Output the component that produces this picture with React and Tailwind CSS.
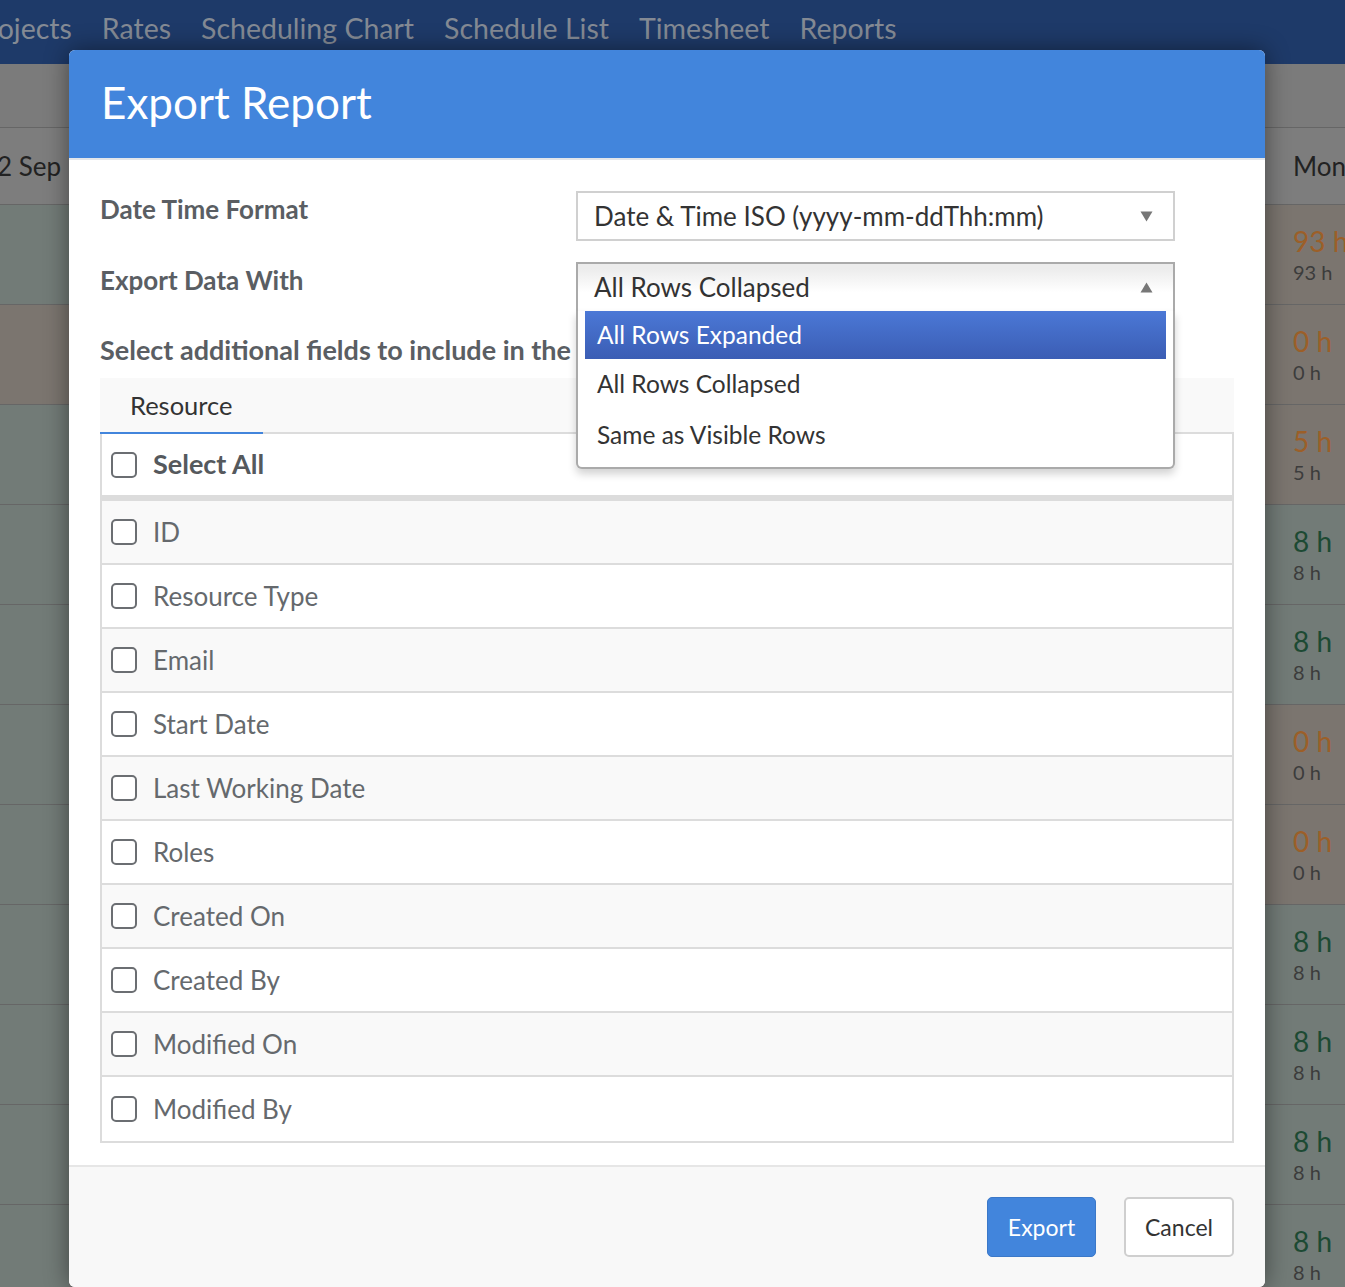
import React from 'react';

const fields = [
  'ID',
  'Resource Type',
  'Email',
  'Start Date',
  'Last Working Date',
  'Roles',
  'Created On',
  'Created By',
  'Modified On',
  'Modified By',
];

// background chart rows (left strip colour, right strip colour, value, tone)
const chartRows = [
  { left: 'bg-[#727b77]', right: 'bg-[#7b756f]', value: '93 h', tone: 'text-[#9c5f28]' },
  { left: 'bg-[#7b756f]', right: 'bg-[#7b756f]', value: '0 h', tone: 'text-[#9c5f28]' },
  { left: 'bg-[#727b77]', right: 'bg-[#7b756f]', value: '5 h', tone: 'text-[#9c5f28]' },
  { left: 'bg-[#727b77]', right: 'bg-[#727b77]', value: '8 h', tone: 'text-[#1d4a33]' },
  { left: 'bg-[#727b77]', right: 'bg-[#727b77]', value: '8 h', tone: 'text-[#1d4a33]' },
  { left: 'bg-[#727b77]', right: 'bg-[#7b756f]', value: '0 h', tone: 'text-[#9c5f28]' },
  { left: 'bg-[#727b77]', right: 'bg-[#7b756f]', value: '0 h', tone: 'text-[#9c5f28]' },
  { left: 'bg-[#727b77]', right: 'bg-[#727b77]', value: '8 h', tone: 'text-[#1d4a33]' },
  { left: 'bg-[#727b77]', right: 'bg-[#727b77]', value: '8 h', tone: 'text-[#1d4a33]' },
  { left: 'bg-[#727b77]', right: 'bg-[#727b77]', value: '8 h', tone: 'text-[#1d4a33]' },
  { left: 'bg-[#727b77]', right: 'bg-[#727b77]', value: '8 h', tone: 'text-[#1d4a33]' },
];

const Caret = ({ up }) => (
  <svg width="13" height="11" viewBox="0 0 13 11" className="shrink-0">
    {up ? (
      <path d="M6.5 0.5 L12.5 10.5 L0.5 10.5 Z" fill="#777" />
    ) : (
      <path d="M0.5 0.5 L12.5 0.5 L6.5 10.5 Z" fill="#777" />
    )}
  </svg>
);

const Checkbox = () => (
  <span className="w-[26px] h-[26px] shrink-0 rounded-[5px] border-2 border-[#6b6e72] bg-white" />
);

const App = () => {
  return (
    <div
      className="relative h-[1287px] overflow-hidden bg-[#727b77]"
      style={{ fontFamily: 'Lato, "Open Sans", sans-serif' }}
    >
      {/* Top navigation (dimmed by overlay) */}
      <div className="h-[64px] bg-[#1e3a69] flex items-start pt-[11px] gap-[30px] text-[28.5px] leading-[34px] text-[#848a94] overflow-hidden whitespace-nowrap">
        <span className="-ml-[29px]">Projects</span>
        <span>Rates</span>
        <span>Scheduling Chart</span>
        <span>Schedule List</span>
        <span>Timesheet</span>
        <span>Reports</span>
      </div>

      {/* Toolbar strip */}
      <div className="h-[64px] bg-[#7b7b7b] border-b border-[#666]" />

      {/* Chart header row */}
      <div className="h-[77px] bg-[#7d7d7d] border-b border-[#666] flex items-center justify-between text-[26px] text-[#222] whitespace-nowrap">
        <span className="-ml-[3px]">2 Sep</span>
        <span className="w-[80px] pl-[28px] overflow-hidden">Mon, 1</span>
      </div>

      {/* Chart rows */}
      {chartRows.map((row, i) => (
        <div key={i} className="h-[100px] flex border-b border-[#666]">
          <div className={`w-[69px] ${row.left}`} />
          <div className="flex-1 bg-[#757575]" />
          <div className={`w-[80px] ${row.right} pl-[28px] pt-[18px] flex flex-col whitespace-nowrap overflow-hidden`}>
            <span className={`text-[28px] leading-[36px] ${row.tone}`}>{row.value}</span>
            <span className="text-[20px] leading-[26px] text-[#3c3c3c]">{row.value}</span>
          </div>
        </div>
      ))}

      {/* Export Report modal */}
      <div className="absolute left-[69px] top-[50px] w-[1196px] h-[1237px] rounded-[6px] overflow-hidden bg-white flex flex-col shadow-[0_0_24px_rgba(0,0,0,0.45)]">
        <div className="h-[110px] shrink-0 bg-[#4285dc] border-b-2 border-[#e3e6ea] flex items-center px-[32px]">
          <h1 className="text-[44px] text-white leading-none pb-[4px]">Export Report</h1>
        </div>

        <div className="flex-1 px-[31px] pt-[31px]">
          {/* Date Time Format */}
          <div className="flex items-start">
            <label className="w-[476px] text-[26px] leading-[36px] font-bold text-[#5a5e63]">
              Date Time Format
            </label>
            <div className="w-[599px] h-[50px] border-2 border-[#d0d0d0] bg-white flex items-center justify-between pl-[16px] pr-[20px] text-[26px] text-[#333]">
              <span>Date &amp; Time ISO (yyyy-mm-ddThh:mm)</span>
              <Caret />
            </div>
          </div>

          {/* Export Data With (open) */}
          <div className="flex items-start mt-[21px]">
            <label className="w-[476px] text-[26px] leading-[36px] font-bold text-[#5a5e63]">
              Export Data With
            </label>
            <div className="relative w-[599px]">
              <div className="h-[49px] border-2 border-b-0 border-[#aaa] bg-linear-to-b from-[#ececec] from-10% to-white to-60% flex items-center justify-between pl-[16px] pr-[20px] text-[26px] text-[#333]">
                <span>All Rows Collapsed</span>
                <Caret up />
              </div>
              <ul className="absolute z-10 left-0 top-full w-full bg-white border-2 border-t-0 border-[#aaa] rounded-b-[6px] px-[7px] pb-[7px] shadow-[0_5px_8px_rgba(0,0,0,0.18)] text-[24.5px]">
                <li className="h-[48px] flex items-center px-[12px] text-white bg-linear-to-b from-[#4b78d6] to-[#3b5db4]">
                  All Rows Expanded
                </li>
                <li className="h-[51px] flex items-center px-[12px] text-[#333]">All Rows Collapsed</li>
                <li className="h-[50px] flex items-center px-[12px] text-[#333]">Same as Visible Rows</li>
              </ul>
            </div>
          </div>

          {/* Additional fields */}
          <p className="mt-[21px] text-[27px] leading-[36px] font-bold text-[#5a5e63] whitespace-nowrap">
            Select additional fields to include in the report
          </p>

          <div className="mt-[10px] h-[56px] bg-[#f9f9f9] border-b-2 border-[#dcdcdc] flex items-end">
            <div className="h-[56px] -mb-[2px] px-[30px] flex items-center border-b-2 border-[#4285dc] text-[25.5px] text-[#333]">
              Resource
            </div>
          </div>

          <div className="border-2 border-t-0 border-[#dcdcdc]">
            <div className="h-[67px] flex items-center gap-[16px] px-[9px] bg-white border-b-[6px] border-[#dcdcdc]">
              <Checkbox />
              <span className="text-[27px] font-bold text-[#55595d]">Select All</span>
            </div>
            {fields.map((field, i) => (
              <div
                key={field}
                className={`h-[64px] flex items-center gap-[16px] px-[9px] ${
                  i % 2 === 0 ? 'bg-[#f9f9f9]' : 'bg-white'
                } ${i < fields.length - 1 ? 'border-b-2 border-[#dcdcdc]' : ''}`}
              >
                <Checkbox />
                <span className="text-[26px] text-[#65696d]">{field}</span>
              </div>
            ))}
          </div>
        </div>

        {/* Footer */}
        <div className="h-[122px] shrink-0 bg-[#f8f8f8] border-t-2 border-[#e6e6e6] flex items-start justify-end gap-[28px] pt-[30px] pr-[31px]">
          <button className="w-[109px] h-[60px] rounded-[5px] bg-[#4285dc] border border-[#3b78c8] text-white text-[23px]">
            Export
          </button>
          <button className="w-[110px] h-[60px] rounded-[5px] bg-white border-2 border-[#cfcfcf] text-[#333] text-[23px]">
            Cancel
          </button>
        </div>
      </div>
    </div>
  );
};

export default App;
